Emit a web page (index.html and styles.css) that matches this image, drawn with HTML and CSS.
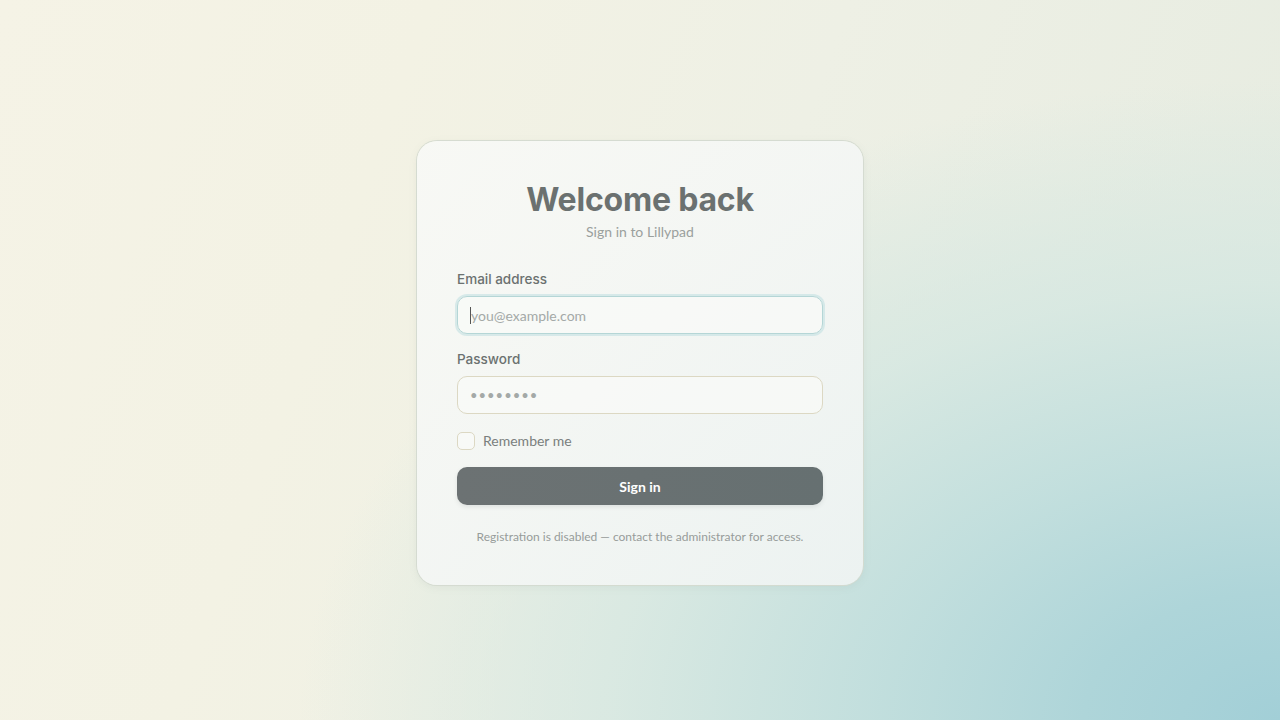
FILE: index.html
```html
<!DOCTYPE html>
<html lang="en">
<head>
<meta charset="utf-8">
<title>Sign in — Lillypad</title>
<link rel="stylesheet" href="styles.css">
</head>
<body>
<main class="page">
  <form class="card">
    <h1 class="title">Welcome back</h1>
    <p class="subtitle">Sign in to Lillypad</p>
    <div class="field">
      <label class="label" for="email">Email address</label>
      <div class="input focused"><span class="caret"></span><span class="placeholder">you@example.com</span></div>
    </div>
    <div class="field">
      <label class="label" for="pw">Password</label>
      <div class="input"><span class="dots">••••••••</span></div>
    </div>
    <label class="remember"><span class="checkbox"></span>Remember me</label>
    <button type="button" class="btn">Sign in</button>
    <p class="note">Registration is disabled — contact the administrator for access.</p>
  </form>
</main>
</body>
</html>
```

FILE: styles.css
```css
html, body { margin: 0; height: 100%; }
body {
  font-family: "Lato", "Noto Sans", sans-serif;
  background:
    radial-gradient(ellipse 980px 640px at 100% 100%,
      rgba(162,207,215,1) 0%,
      rgba(174,213,217,1) 20%,
      rgba(192,222,221,0.95) 42%,
      rgba(212,231,225,0.8) 68%,
      rgba(228,236,226,0) 100%),
    linear-gradient(110deg, #f5f3e6 0%, #f3f2e4 28%, #eef0e5 55%, #e5ebe0 100%);
}
.page {
  height: 720px;
  display: flex;
  align-items: center;
  justify-content: center;
}
.card {
  box-sizing: border-box;
  width: 446px;
  height: 444px;
  margin-top: 6px;
  padding: 40px 40px 0;
  border-radius: 20px;
  background: linear-gradient(135deg, rgba(248,249,246,0.93), rgba(240,244,243,0.9));
  box-shadow: 0 0 0 1px rgba(212,218,208,0.95), 0 2px 8px rgba(120,140,130,0.10);
  display: flex;
  flex-direction: column;
}
.title {
  margin: 0;
  text-align: center;
  font-family: "Inter", "Open Sans", sans-serif;
  font-weight: 700;
  font-size: 32px;
  letter-spacing: -0.2px;
  line-height: 38px;
  color: #6b7170;
}
.subtitle {
  margin: 4px 0 0;
  text-align: center;
  font-size: 14px;
  line-height: 18px;
  color: #9aa09d;
}
.field { display: flex; flex-direction: column; }
.field:first-of-type { margin-top: 29px; }
.field + .field { margin-top: 16px; }
.label {
  font-family: "Inter", "Open Sans", sans-serif;
  font-weight: 500;
  font-size: 13.5px;
  line-height: 18px;
  color: #6b7170;
  margin-bottom: 8px;
}
.input {
  box-sizing: border-box;
  height: 38px;
  border: 1px solid #dcd8c3;
  border-radius: 10px;
  background: rgba(250,251,248,0.7);
  display: flex;
  align-items: center;
  padding: 0 12px;
  font-size: 14px;
}
.input.focused {
  border-color: #b5d6d6;
  box-shadow: 0 0 0 2px rgba(190,222,224,0.55);
}
.caret { width: 1px; height: 17px; background: #555; }
.placeholder { color: #a4a9a7; }
.dots { color: #a4a9a7; font-size: 13px; letter-spacing: 1px; }
.remember {
  margin-top: 18px;
  display: flex;
  align-items: center;
  gap: 8px;
  font-size: 14px;
  color: #7a7f7d;
  line-height: 18px;
}
.checkbox {
  box-sizing: border-box;
  width: 18px; height: 18px;
  border: 1px solid #dcd8c3;
  border-radius: 5px;
  background: rgba(250,251,248,0.7);
}
.btn {
  margin-top: 17px;
  height: 38px;
  border: 0;
  border-radius: 10px;
  background: linear-gradient(90deg, #6c7273, #667071);
  color: #fff;
  font-family: "Lato", sans-serif;
  font-weight: 700;
  font-size: 14px;
  box-shadow: 0 2px 4px rgba(80,90,90,0.12);
}
.note {
  margin: 24px 0 0;
  text-align: center;
  font-size: 12px;
  line-height: 16px;
  color: #979c9a;
}
```
